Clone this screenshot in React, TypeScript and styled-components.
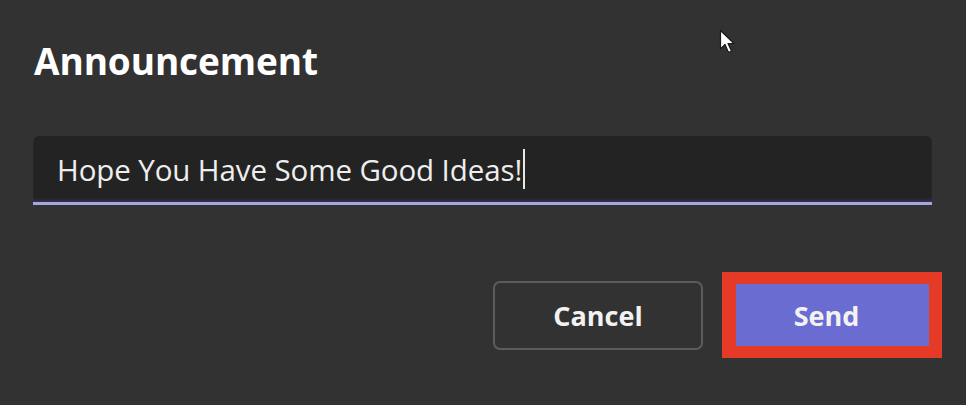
import React from "react";
import styled, { createGlobalStyle } from "styled-components";

const Global = createGlobalStyle`
  html, body { margin: 0; padding: 0; background: #323232; }
  body { font-family: "Open Sans", "Noto Sans", sans-serif; color: #fff; }
`;

const Page = styled.div`
  position: relative;
  width: 966px;
  height: 405px;
  background: #323232;
  overflow: hidden;
  padding: 38px 24px 0 33px;
  box-sizing: border-box;
  display: flex;
  flex-direction: column;
`;

const Title = styled.h1`
  margin: 0 0 0 1px;
  font-size: 37px;
  line-height: 46px;
  font-weight: 700;
  color: #ffffff;
  letter-spacing: -0.1px;
`;

const Field = styled.div`
  margin-top: 52px;
  width: 899px;
  height: 69px;
  box-sizing: border-box;
  background: #232323;
  border-radius: 6px 6px 0 0;
  border-bottom: 3px solid #a6a6de;
  box-shadow: inset 0 -3px 4px -2px #3a3a6a;
  padding: 0 0 0 24px;
  display: flex;
  align-items: center;
`;

const FieldText = styled.span`
  font-size: 29.5px;
  color: #eeeeee;
  letter-spacing: -0.1px;
`;

const Caret = styled.span`
  display: inline-block;
  width: 2px;
  height: 40px;
  background: #e8e8e8;
  margin-left: 1px;
`;

const Actions = styled.div`
  margin-top: 67px;
  display: flex;
  justify-content: flex-end;
  align-items: center;
  gap: 19px;
`;

const Button = styled.button<{ $primary?: boolean }>`
  font-family: "Open Sans", "Noto Sans", sans-serif;
  font-weight: 700;
  font-size: 27px;
  color: #f2f2f2;
  cursor: pointer;
  border-radius: ${(p) => (p.$primary ? "0" : "7px")};
  border: ${(p) => (p.$primary ? "none" : "2px solid #5c5c5c")};
  background: ${(p) => (p.$primary ? "#6a6cd2" : "transparent")};
  width: ${(p) => (p.$primary ? "193px" : "210px")};
  height: ${(p) => (p.$primary ? "62px" : "69px")};
  display: flex;
  align-items: center;
  justify-content: center;
  padding: ${(p) => (p.$primary ? "0 12px 0 0" : "0")};
  box-sizing: border-box;
`;

const Highlight = styled.div`
  border: solid #e53b26;
  border-width: 12px 13px 12px 14px;
  display: flex;
`;

const Pointer = styled.svg`
  position: absolute;
  left: 719px;
  top: 29px;
`;

export default function App() {
  return (
    <>
      <Global />
      <Page>
        <Title>Announcement</Title>
        <Field>
          <FieldText>Hope You Have Some Good Ideas!</FieldText>
          <Caret />
        </Field>
        <Actions>
          <Button>Cancel</Button>
          <Highlight>
            <Button $primary>Send</Button>
          </Highlight>
        </Actions>
        <Pointer width="20" height="28" viewBox="0 0 20 28">
          <path
            d="M1.5 1.5 L1.5 20 L6 15.5 L9.5 23.5 L12.5 22 L9 14.5 L15 14.5 Z"
            fill="#ffffff"
            stroke="#1a1a1a"
            strokeWidth="1.2"
            strokeLinejoin="round"
          />
        </Pointer>
      </Page>
    </>
  );
}
